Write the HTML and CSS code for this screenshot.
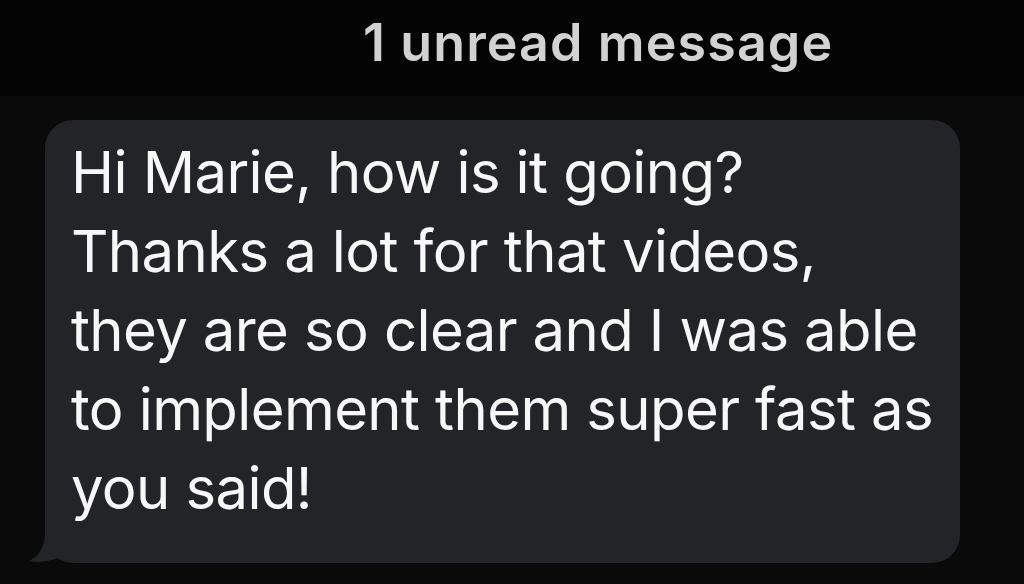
FILE: index.html
```html
<!DOCTYPE html>
<html lang="en">
<head>
<meta charset="utf-8">
<title>Message</title>
<link rel="stylesheet" href="styles.css">
</head>
<body>
<header class="unread-bar">
  <span class="unread-label">1 unread message</span>
</header>
<main class="thread">
  <div class="bubble">
    <p class="bubble-text">Hi Marie, how is it going?<br>Thanks a lot for that videos,<br>they are so clear and I was able<br>to implement them super fast as<br>you said!</p>
    <svg class="bubble-tail" width="40" height="44" viewBox="0 0 40 44" aria-hidden="true">
      <path d="M17 0 L17 14 C17 28 10 38 1 42 C8 44 22 43 34 37 L40 37 L40 0 Z" fill="#232427"/>
    </svg>
  </div>
</main>
</body>
</html>
```

FILE: styles.css
```css
html, body {
  margin: 0;
  padding: 0;
}

body {
  width: 1024px;
  height: 584px;
  overflow: hidden;
  background: #0a0a0a;
  font-family: "Inter", "Liberation Sans", sans-serif;
}

.unread-bar {
  height: 96px;
  background: #040404;
  box-sizing: border-box;
  padding-left: 363px;
  padding-top: 13px;
}

.unread-label {
  display: block;
  color: #d2d2d2;
  font-size: 52px;
  font-weight: 600;
  line-height: 60px;
  letter-spacing: 1.1px;
}

.thread {
  padding-top: 24px;
  padding-left: 45px;
}

.bubble {
  position: relative;
  width: 915px;
  height: 443px;
  box-sizing: border-box;
  background: #232427;
  border-radius: 28px;
  padding: 13px 0 0 26px;
}

.bubble-text {
  margin: 0;
  color: #f7f7f7;
  font-size: 58px;
  font-weight: 400;
  line-height: 79px;
  letter-spacing: -0.6px;
}

.bubble-tail {
  position: absolute;
  left: -17px;
  bottom: 0;
  display: block;
}
```
